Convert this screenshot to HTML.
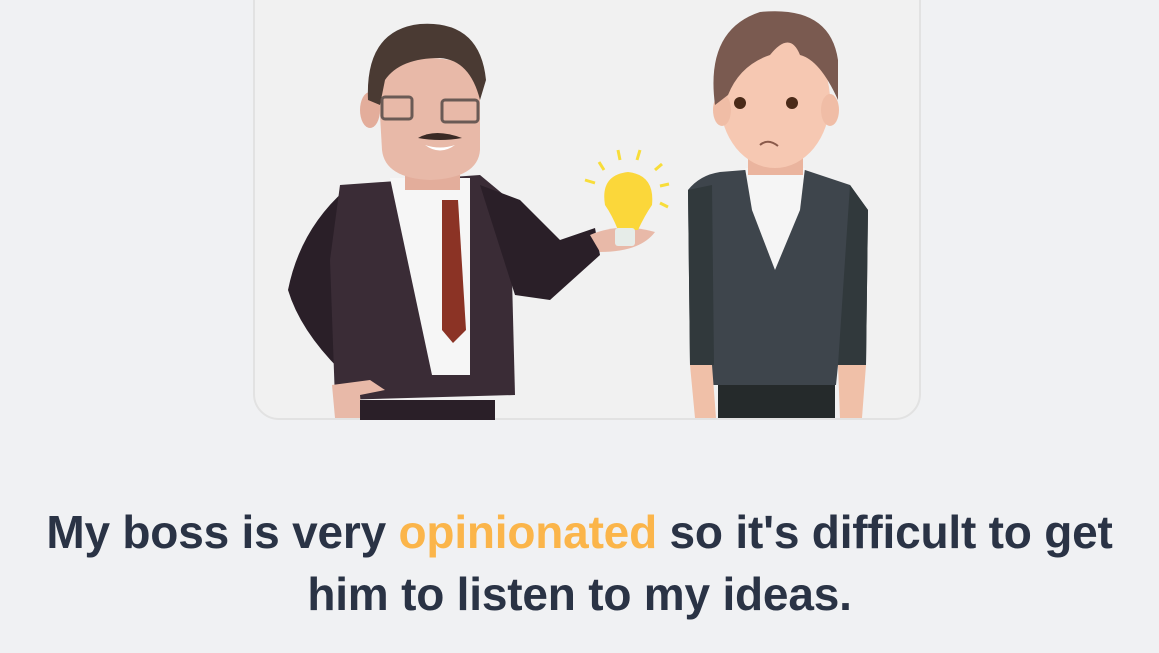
<!DOCTYPE html>
<html><head><meta charset="utf-8"><style>
html,body{margin:0;padding:0;width:1159px;height:653px;overflow:hidden;background:#f0f1f3;}
.card{position:absolute;left:253px;top:-30px;width:664px;height:446px;border:2px solid #e2e2e2;border-radius:26px;background:#f1f1f1;}
svg{position:absolute;left:0;top:0;}
.t{position:absolute;left:0;width:1159px;top:501px;text-align:center;font-family:"Liberation Sans",sans-serif;font-size:46px;font-weight:bold;color:#2a3345;line-height:62px;letter-spacing:-0.2px;}
.o{color:#fbb54a;}
</style></head><body>
<div class="card"></div>
<svg width="1159" height="653" viewBox="0 0 1159 653">
<!-- boss -->
<path d="M345 190 Q300 230 288 290 Q300 330 340 370 L345 390 L370 390 L360 350 Q330 310 340 280 Z" fill="#2a1f28"/>
<path d="M340 185 L480 175 L510 200 L515 395 L335 400 L330 260 Z" fill="#3a2c36"/>
<path d="M480 185 L520 200 L560 240 L595 228 L600 255 L550 300 L515 295 Z" fill="#2a1f28"/>
<path d="M590 235 Q620 222 655 232 Q640 252 600 252 Z" fill="#e8b9a8"/>
<path d="M390 178 L470 178 L470 375 L432 375 Z" fill="#f6f6f6"/>
<path d="M442 200 L458 200 L466 330 L453 343 L442 330 Z" fill="#8b3325"/>
<path d="M332 385 L370 380 L385 390 L360 395 L362 418 L335 418 Z" fill="#e8b9a8"/>
<rect x="360" y="400" width="135" height="20" fill="#2a1f28"/>
<rect x="405" y="160" width="55" height="30" fill="#e3ad9b"/>
<path d="M378 80 Q380 58 425 58 Q478 58 480 85 L480 150 Q478 178 430 180 Q385 178 382 150 Z" fill="#e8b9a8"/>
<ellipse cx="370" cy="110" rx="10" ry="18" fill="#e3ad9b"/>
<path d="M368 100 Q365 30 420 24 Q480 20 486 80 L480 100 Q470 60 440 58 Q400 58 385 80 L380 105 Z" fill="#4a3a33"/>
<rect x="382" y="97" width="30" height="22" rx="3" fill="none" stroke="#6a5a55" stroke-width="3"/>
<rect x="442" y="100" width="36" height="22" rx="3" fill="none" stroke="#6a5a55" stroke-width="3"/>
<path d="M418 138 Q435 128 462 138 Q440 142 418 138Z" fill="#3a2a25"/>
<path d="M425 145 Q440 150 455 145 Q440 156 425 145Z" fill="#fff"/>
<!-- bulb -->
<g stroke="#f8dd3a" stroke-width="3"><line x1="585" y1="180" x2="595" y2="183"/><line x1="599" y1="162" x2="604" y2="170"/><line x1="618" y1="150" x2="620" y2="160"/><line x1="640" y1="150" x2="637" y2="160"/><line x1="662" y1="164" x2="655" y2="170"/><line x1="669" y1="184" x2="660" y2="186"/><line x1="668" y1="207" x2="660" y2="203"/></g>
<path d="M605 205 Q600 175 628 172 Q655 175 652 205 Q645 215 638 230 L618 230 Q612 215 605 205Z" fill="#fbd73a"/>
<rect x="615" y="228" width="20" height="18" rx="3" fill="#e6ece8"/>
<!-- young man -->
<path d="M688 190 Q700 175 720 172 L745 170 L805 170 L850 185 L868 210 L866 365 L838 365 L836 385 L710 385 L708 370 L690 365 Z" fill="#3e454c"/>
<path d="M688 190 L712 185 L714 365 L690 365 Z M850 185 L868 210 L866 365 L838 365 Z" fill="#31393c"/>
<path d="M745 168 L805 168 L800 210 L775 270 L752 210 Z" fill="#f5f5f5"/>
<path d="M690 365 L712 365 L716 418 L695 418 Z M838 365 L866 365 L862 418 L840 418 Z" fill="#f0c0a8"/>
<rect x="718" y="385" width="117" height="33" fill="#252a2b"/>
<rect x="748" y="140" width="55" height="35" fill="#eab49e"/>
<ellipse cx="775" cy="100" rx="55" ry="68" fill="#f6c8b2"/>
<ellipse cx="722" cy="110" rx="9" ry="16" fill="#f0bda6"/>
<ellipse cx="830" cy="110" rx="9" ry="16" fill="#f0bda6"/>
<path d="M715 105 Q705 30 760 12 Q830 5 838 60 L838 100 Q820 60 800 55 Q790 30 770 55 Q740 65 728 95 Z" fill="#7a5a50"/>
<circle cx="740" cy="103" r="6" fill="#4a2a18"/><circle cx="792" cy="103" r="6" fill="#4a2a18"/>
<path d="M760 145 Q768 138 778 146" stroke="#8a5a4a" stroke-width="2" fill="none"/>
</svg>
<div class="t">My boss is very <span class="o">opinionated</span> so it's difficult to get<br>him to listen to my ideas.</div>
</body></html>
